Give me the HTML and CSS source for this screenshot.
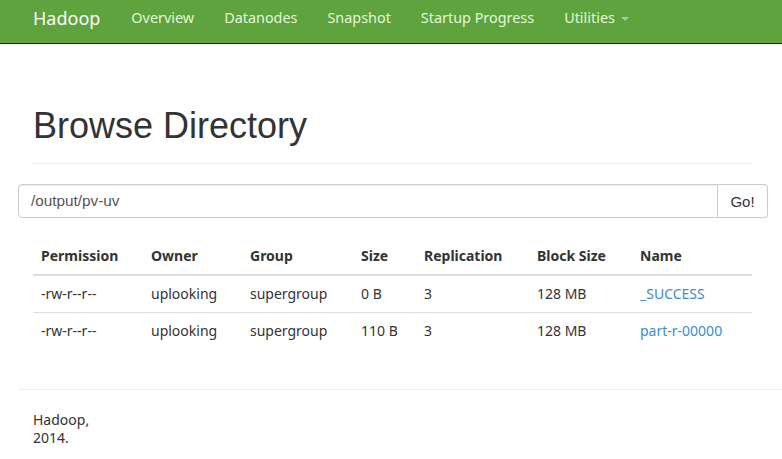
FILE: index.html
```html
<!DOCTYPE html>
<html>
<head>
<meta charset="utf-8">
<link rel="stylesheet" href="styles.css">
</head>
<body>
<nav class="navbar">
  <a class="brand">Hadoop</a>
  <ul class="nav">
    <li><a>Overview</a></li>
    <li><a>Datanodes</a></li>
    <li><a>Snapshot</a></li>
    <li><a>Startup Progress</a></li>
    <li><a>Utilities <span class="caret"></span></a></li>
  </ul>
</nav>
<div class="page">
  <div class="page-header"><h1>Browse Directory</h1></div>
</div>
<div class="input-group">
  <div class="input">/output/pv-uv</div>
  <button class="go">Go!</button>
</div>
<div class="page">
  <table class="files">
    <colgroup>
      <col style="width:110px"><col style="width:99px"><col style="width:111px"><col style="width:63px"><col style="width:113px"><col style="width:103px"><col>
    </colgroup>
    <thead>
      <tr><th>Permission</th><th>Owner</th><th>Group</th><th>Size</th><th>Replication</th><th>Block Size</th><th>Name</th></tr>
    </thead>
    <tbody>
      <tr><td>-rw-r--r--</td><td>uplooking</td><td>supergroup</td><td>0 B</td><td>3</td><td>128 MB</td><td><a>_SUCCESS</a></td></tr>
      <tr><td>-rw-r--r--</td><td>uplooking</td><td>supergroup</td><td>110 B</td><td>3</td><td>128 MB</td><td><a>part-r-00000</a></td></tr>
    </tbody>
  </table>
</div>
<hr class="foot-rule">
<div class="footer">Hadoop,<br>2014.</div>
</body>
</html>
```
FILE: styles.css
```css
html, body { margin: 0; padding: 0; background: #fff; }
body {
  font-family: "Noto Sans", "Open Sans", sans-serif;
  font-size: 14px;
  color: #333;
  width: 782px;
  overflow: hidden;
}
.navbar {
  height: 43px;
  background: #5fa33e;
  border-bottom: 1px solid #2a2a2a;
  display: flex;
  align-items: center;
  padding-left: 33px;
  box-sizing: content-box;
}
.brand {
  color: #fff;
  font-size: 18px;
  margin-right: 16px;
  line-height: 20px;
  padding-bottom: 7px;
}
.nav {
  list-style: none;
  display: flex;
  margin: 0;
  padding: 0;
}
.nav li a {
  color: #e4f7d6;
  font-size: 14.4px;
  display: block;
  padding: 0 15px 7px 15px;
  line-height: 20px;
}
.caret {
  display: inline-block;
  width: 0; height: 0;
  border-top: 4px solid #a8c99a;
  border-left: 4px solid transparent;
  border-right: 4px solid transparent;
  vertical-align: middle;
  margin-left: 2px;
}
.page { padding: 0 30px 0 33px; }
.page-header {
  margin: 62px 0 20px;
  border-bottom: 1px solid #eee;
  padding-bottom: 17px;
}
h1 {
  font-family: "Liberation Sans", Arial, sans-serif;
  font-size: 36px;
  font-weight: 500;
  line-height: 40px;
  margin: 0;
}
.input-group {
  display: flex;
  margin: 0 14px 0 18px;
  height: 34px;
}
.input {
  flex: 1;
  border: 1px solid #ccc;
  border-radius: 4px 0 0 4px;
  padding: 0 12px;
  line-height: 32px;
  font-family: "Liberation Sans", Arial, sans-serif;
  font-size: 15.3px;
  color: #555;
  box-shadow: inset 0 1px 1px rgba(0,0,0,.075);
}
.go {
  width: 50px;
  border: 1px solid #ccc;
  border-left: none;
  border-radius: 0 4px 4px 0;
  background: #fff;
  font-family: "Liberation Sans", Arial, sans-serif;
  font-size: 15px;
  color: #333;
  padding: 0;
}
.files {
  width: 719px;
  border-collapse: collapse;
  margin-top: 20px;
  table-layout: fixed;
}
.files th, .files td {
  text-align: left;
  padding: 8px;
  line-height: 20px;
}
.files th {
  font-weight: bold;
  border-bottom: 2px solid #ddd;
}
.files td { border-bottom: 1px solid #ddd; }
.files tbody tr:last-child td { border-bottom: none; }
.files a { color: #428bca; }
.foot-rule {
  border: 0;
  border-top: 1px solid #eee;
  margin: 40px 0 0 18px;
}
.footer {
  padding: 21px 33px;
  line-height: 18px;
}
```
